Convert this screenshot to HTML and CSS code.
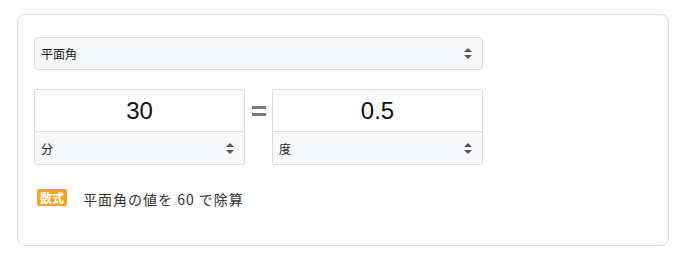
FILE: index.html
```html
<!DOCTYPE html>
<html lang="ja">
<head>
<meta charset="utf-8">
<link rel="stylesheet" href="styles.css">
</head>
<body>
<div class="card">
  <div class="select wide">
    <span>平面角</span>
    <svg class="arrows" width="8" height="11" viewBox="0 0 8 11"><path d="M4 0 L8 4 L0 4 Z M0 7 L8 7 L4 11 Z" fill="#555"/></svg>
  </div>
  <div class="convert">
    <div class="box">
      <div class="value">30</div>
      <div class="select unit">
        <span>分</span>
        <svg class="arrows" width="8" height="11" viewBox="0 0 8 11"><path d="M4 0 L8 4 L0 4 Z M0 7 L8 7 L4 11 Z" fill="#555"/></svg>
      </div>
    </div>
    <div class="eq"><i></i><i></i></div>
    <div class="box">
      <div class="value">0.5</div>
      <div class="select unit">
        <span>度</span>
        <svg class="arrows" width="8" height="11" viewBox="0 0 8 11"><path d="M4 0 L8 4 L0 4 Z M0 7 L8 7 L4 11 Z" fill="#555"/></svg>
      </div>
    </div>
  </div>
  <div class="formula">
    <span class="badge">数式</span>
    <span class="ftext">平面角の値を 60 で除算</span>
  </div>
</div>
</body>
</html>
```
FILE: styles.css
```css
html, body {
  margin: 0;
  padding: 0;
  background: #fff;
}
body {
  font-family: "Liberation Sans", "Noto Sans CJK JP", sans-serif;
  color: #222;
}
.card {
  box-sizing: border-box;
  margin: 14px 0 0 17px;
  width: 652px;
  height: 232px;
  border: 1px solid #dcdcdc;
  border-radius: 8px;
  padding: 22px 16px 0 16px;
}
.select {
  box-sizing: border-box;
  display: flex;
  align-items: center;
  justify-content: space-between;
  background: #f7f8fa;
  font-family: "Noto Sans CJK JP", sans-serif;
  font-size: 12px;
  color: #222;
  padding: 0 10px 0 6px;
}
.select.wide {
  width: 449px;
  height: 33px;
  border: 1px solid #dcdcdc;
  border-radius: 4px;
}
.arrows {
  display: block;
}
.convert {
  display: flex;
  align-items: flex-start;
  margin-top: 19px;
}
.box {
  box-sizing: border-box;
  width: 211px;
  border: 1px solid #dcdcdc;
  border-radius: 2px;
  display: flex;
  flex-direction: column;
}
.value {
  height: 41px;
  display: flex;
  align-items: center;
  justify-content: center;
  font-size: 24px;
  color: #111;
  border-bottom: 1px solid #dcdcdc;
  background: #fff;
}
.select.unit {
  height: 32px;
}
.eq {
  width: 27px;
  display: flex;
  flex-direction: column;
  align-items: center;
  gap: 4px;
  margin-top: 17px;
}
.eq i {
  display: block;
  width: 14px;
  height: 3px;
  background: #7a7a7a;
}
.formula {
  display: flex;
  align-items: center;
  margin-top: 21px;
  padding-left: 3px;
}
.badge {
  display: inline-block;
  background: #f5a524;
  color: #fff;
  font-family: "Noto Sans CJK JP", sans-serif;
  font-weight: bold;
  font-size: 12px;
  line-height: 17px;
  padding: 0 3px;
  border-radius: 2px;
}
.ftext {
  margin-left: 16px;
  font-family: "Noto Sans CJK JP", sans-serif;
  font-size: 14px;
  letter-spacing: 1px;
  color: #333;
  margin-top: 3px;
}
```
